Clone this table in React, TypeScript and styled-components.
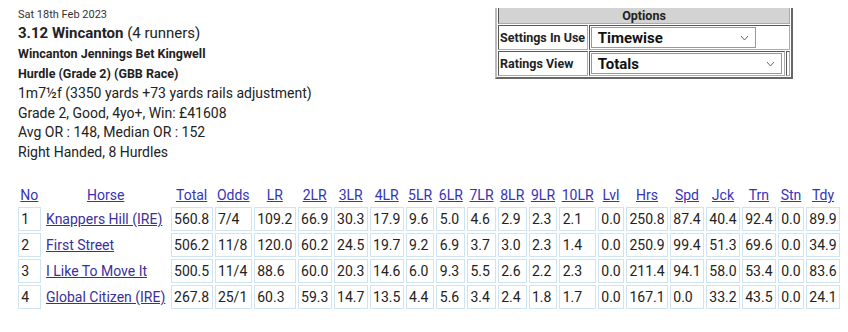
import React from 'react'
import styled, { createGlobalStyle } from 'styled-components'

const GlobalStyle = createGlobalStyle`
  body {
    margin: 8px;
    background: #fff;
    font-family: Roboto, 'Liberation Sans', sans-serif;
    color: #222;
    overflow: hidden;
  }
`

const Page = styled.div`
  padding: 0 10px;
  width: 900px;
`

const Top = styled.div`
  display: flex;
  align-items: flex-start;
`

const Info = styled.div`
  width: 477px;
`

const DateLine = styled.div`
  font-size: 11px;
  line-height: 14px;
  color: #333;
`

const Title = styled.div`
  font-size: 15px;
  line-height: 22px;
  b {
    font-weight: 700;
  }
`

const RaceName = styled.div`
  font-size: 12.5px;
  font-weight: 700;
  line-height: 20px;
`

const Line = styled.div`
  font-size: 14px;
  line-height: 19.5px;
`

const OptionsTable = styled.table`
  border: 2px outset #bbb;
  border-spacing: 1px;
  margin-top: -4px;
  width: 298px;
  font-family: Roboto, 'Liberation Sans', sans-serif;
`

const OptionsHead = styled.th`
  background: #d3d3d3;
  border: 1px inset #aaa;
  font-size: 12.5px;
  font-weight: 700;
  height: 15px;
  padding: 0;
  line-height: 15px;
`

const OptionLabel = styled.td`
  border: 1px inset #aaa;
  font-size: 12.5px;
  font-weight: 700;
  padding: 0 1px;
  height: 23px;
  white-space: nowrap;
`

const OptionCell = styled.td`
  border: 1px inset #aaa;
  padding: 1px;
`

const Spacer = styled.td`
  border: 1px inset #aaa;
  padding: 0;
  width: 2px;
`

const Select = styled.div<{ $w: number }>`
  width: ${p => p.$w}px;
  height: 21px;
  border: 1px solid #999;
  box-sizing: border-box;
  display: flex;
  align-items: center;
  justify-content: space-between;
  padding: 0 6px;
  font-size: 15px;
  font-weight: 700;
  color: #111;
`

const Caret = styled.svg`
  width: 9px;
  height: 6px;
`

const Runners = styled.table`
  margin-top: 21px;
  border-spacing: 2px;
  margin-left: -2px;
  font-size: 14px;
  white-space: nowrap;
`

const HeadCell = styled.th<{ $left?: boolean }>`
  font-weight: 400;
  padding: 2px 2.35px;
  text-align: ${p => (p.$left ? 'left' : 'center')};
  a {
    color: #3434b8;
    text-decoration: underline;
  }
`

const Cell = styled.td<{ $plain?: boolean }>`
  border: 1px solid ${p => (p.$plain ? 'transparent' : '#cfe4f2')};
  padding: 0 2.35px;
  height: 22px;
  color: #222;
  a {
    color: #3b2f9c;
    text-decoration: underline;
  }
`

const cols = ['Total', 'Odds', 'LR', '2LR', '3LR', '4LR', '5LR', '6LR', '7LR', '8LR', '9LR', '10LR', 'Lvl', 'Hrs', 'Spd', 'Jck', 'Trn', 'Stn', 'Tdy']

const runners = [
  { no: 1, horse: 'Knappers Hill (IRE)', v: ['560.8', '7/4', '109.2', '66.9', '30.3', '17.9', '9.6', '5.0', '4.6', '2.9', '2.3', '2.1', '0.0', '250.8', '87.4', '40.4', '92.4', '0.0', '89.9'] },
  { no: 2, horse: 'First Street', v: ['506.2', '11/8', '120.0', '60.2', '24.5', '19.7', '9.2', '6.9', '3.7', '3.0', '2.3', '1.4', '0.0', '250.9', '99.4', '51.3', '69.6', '0.0', '34.9'] },
  { no: 3, horse: 'I Like To Move It', v: ['500.5', '11/4', '88.6', '60.0', '20.3', '14.6', '6.0', '9.3', '5.5', '2.6', '2.2', '2.3', '0.0', '211.4', '94.1', '58.0', '53.4', '0.0', '83.6'] },
  { no: 4, horse: 'Global Citizen (IRE)', v: ['267.8', '25/1', '60.3', '59.3', '14.7', '13.5', '4.4', '5.6', '3.4', '2.4', '1.8', '1.7', '0.0', '167.1', '0.0', '33.2', '43.5', '0.0', '24.1'] },
]

const Arrow = () => (
  <Caret viewBox="0 0 9 6">
    <path d="M1 1l3.5 4L8 1" fill="none" stroke="#666" strokeWidth="1" />
  </Caret>
)

export default function App() {
  return (
    <Page>
      <GlobalStyle />
      <Top>
        <Info>
          <DateLine>Sat 18th Feb 2023</DateLine>
          <Title>
            <b>3.12 Wincanton</b> (4 runners)
          </Title>
          <RaceName>Wincanton Jennings Bet Kingwell</RaceName>
          <RaceName>Hurdle (Grade 2) (GBB Race)</RaceName>
          <Line>1m7½f (3350 yards +73 yards rails adjustment)</Line>
          <Line>Grade 2, Good, 4yo+, Win: £41608</Line>
          <Line>Avg OR : 148, Median OR : 152</Line>
          <Line>Right Handed, 8 Hurdles</Line>
        </Info>
        <OptionsTable>
          <tbody>
            <tr>
              <OptionsHead colSpan={3}>Options</OptionsHead>
            </tr>
            <tr>
              <OptionLabel>Settings In Use</OptionLabel>
              <OptionCell colSpan={2}>
                <Select $w={165}>
                  Timewise <Arrow />
                </Select>
              </OptionCell>
            </tr>
            <tr>
              <OptionLabel>Ratings View</OptionLabel>
              <OptionCell>
                <Select $w={191}>
                  Totals <Arrow />
                </Select>
              </OptionCell>
              <Spacer />
            </tr>
          </tbody>
        </OptionsTable>
      </Top>
      <Runners>
        <thead>
          <tr>
            <HeadCell $left>
              <a href="#">No</a>
            </HeadCell>
            <HeadCell>
              <a href="#">Horse</a>
            </HeadCell>
            {cols.map(c => (
              <HeadCell key={c}>
                <a href="#">{c}</a>
              </HeadCell>
            ))}
            <HeadCell />
          </tr>
        </thead>
        <tbody>
          {runners.map(r => (
            <tr key={r.no}>
              <Cell>{r.no}</Cell>
              <Cell $plain>
                <a href="#">{r.horse}</a>
              </Cell>
              {r.v.map((x, i) => (
                <Cell key={i}>{x}</Cell>
              ))}
              <Cell $plain>
                <a href="#">Hist</a>
              </Cell>
            </tr>
          ))}
        </tbody>
      </Runners>
    </Page>
  )
}
